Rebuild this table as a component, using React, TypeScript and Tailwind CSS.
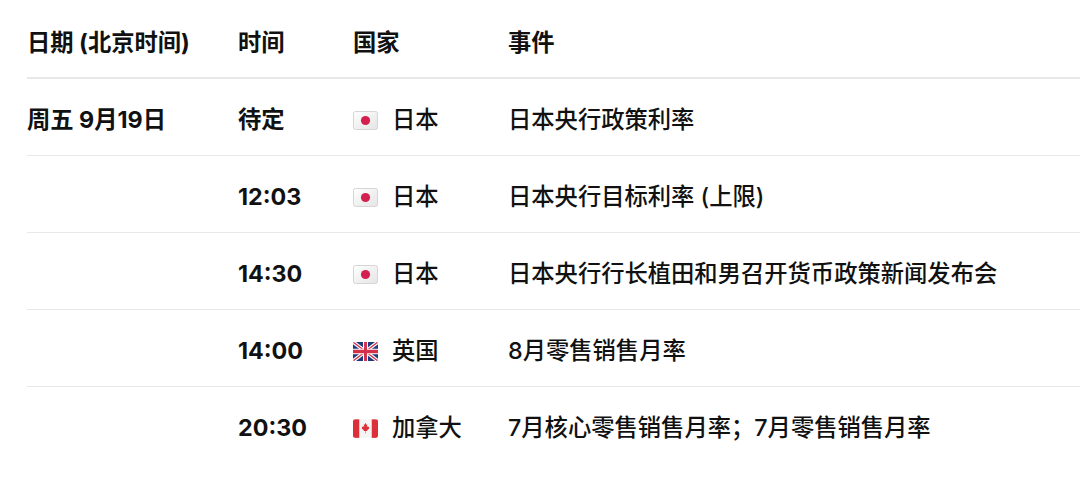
import React from "react";

const JP = () => (
  <svg width="25" height="19" viewBox="0 0 25 19" className="shrink-0">
    <defs>
      <linearGradient id="jpg" x1="0" y1="0" x2="1" y2="1">
        <stop offset="0" stopColor="#ffffff" />
        <stop offset="1" stopColor="#e4e4e4" />
      </linearGradient>
    </defs>
    <rect x="0.5" y="0.5" width="24" height="18" rx="2" fill="url(#jpg)" stroke="#d6d6d6" strokeWidth="1" />
    <circle cx="12.5" cy="9.5" r="4.6" fill="#d4204f" />
  </svg>
);

const UK = () => (
  <svg width="25" height="19" viewBox="0 0 60 40" preserveAspectRatio="none" className="shrink-0">
    <clipPath id="ukc">
      <rect width="60" height="40" rx="4" />
    </clipPath>
    <g clipPath="url(#ukc)">
      <rect width="60" height="40" fill="#1f3a7a" />
      <path d="M0,0 L60,40 M60,0 L0,40" stroke="#fff" strokeWidth="8" />
      <path d="M0,0 L60,40 M60,0 L0,40" stroke="#d3304a" strokeWidth="3" />
      <path d="M30,0 V40 M0,20 H60" stroke="#fff" strokeWidth="12" />
      <path d="M30,0 V40 M0,20 H60" stroke="#d3304a" strokeWidth="7" />
    </g>
  </svg>
);

const CA = () => (
  <svg width="25" height="19" viewBox="0 0 48 36" className="shrink-0">
    <clipPath id="cac">
      <rect width="48" height="36" rx="4" />
    </clipPath>
    <g clipPath="url(#cac)">
      <rect width="48" height="36" fill="#f4f4f4" />
      <rect width="12" height="36" fill="#dd2f3a" />
      <rect x="36" width="12" height="36" fill="#dd2f3a" />
      <path
        d="M24,7 L22.4,10.6 L20.6,9.8 L21.6,15.4 L19.6,13.4 L19,14.8 L16.8,14.4 L17.6,17.2 L16.6,17.8 L21,21.4 L20.4,23 L23.6,22.6 L23.5,27 L24.5,27 L24.4,22.6 L27.6,23 L27,21.4 L31.4,17.8 L30.4,17.2 L31.2,14.4 L29,14.8 L28.4,13.4 L26.4,15.4 L27.4,9.8 L25.6,10.6 Z"
        fill="#dd2f3a"
      />
    </g>
  </svg>
);

type Row = { date?: string; time: string; flag: "jp" | "uk" | "ca"; country: string; event: string };

const rows: Row[] = [
  { date: "周五 9月19日", time: "待定", flag: "jp", country: "日本", event: "日本央行政策利率" },
  { time: "12:03", flag: "jp", country: "日本", event: "日本央行目标利率 (上限)" },
  { time: "14:30", flag: "jp", country: "日本", event: "日本央行行长植田和男召开货币政策新闻发布会" },
  { time: "14:00", flag: "uk", country: "英国", event: "8月零售销售月率" },
  { time: "20:30", flag: "ca", country: "加拿大", event: "7月核心零售销售月率；7月零售销售月率" },
];

const Flag = ({ f }: { f: Row["flag"] }) => (f === "jp" ? <JP /> : f === "uk" ? <UK /> : <CA />);

export default function App() {
  return (
    <div
      className="w-[1080px] h-[479px] bg-white text-[#111111] overflow-hidden"
      style={{ fontFamily: 'Inter, "Noto Sans CJK SC", sans-serif' }}
    >
      <div className="pl-[27px]">
        <div className="grid grid-cols-[211px_115px_155px_1fr] items-center h-[79px] pt-[10px] border-b-2 border-[#e8e8e8] text-[23.3px] font-bold">
          <div>日期 (北京时间)</div>
          <div>时间</div>
          <div>国家</div>
          <div>事件</div>
        </div>
        {rows.map((r, i) => (
          <div
            key={i}
            className={`grid grid-cols-[211px_115px_155px_1fr] items-center h-[77px] pt-[6px] text-[23.3px] ${
              i < rows.length - 1 ? "border-b border-[#e8e8e8]" : ""
            }`}
          >
            <div className="font-bold">{r.date ?? ""}</div>
            <div className="font-bold">{r.time}</div>
            <div className="flex items-center gap-[14px] font-medium">
              <Flag f={r.flag} />
              <span>{r.country}</span>
            </div>
            <div className="font-medium">{r.event}</div>
          </div>
        ))}
      </div>
    </div>
  );
}
